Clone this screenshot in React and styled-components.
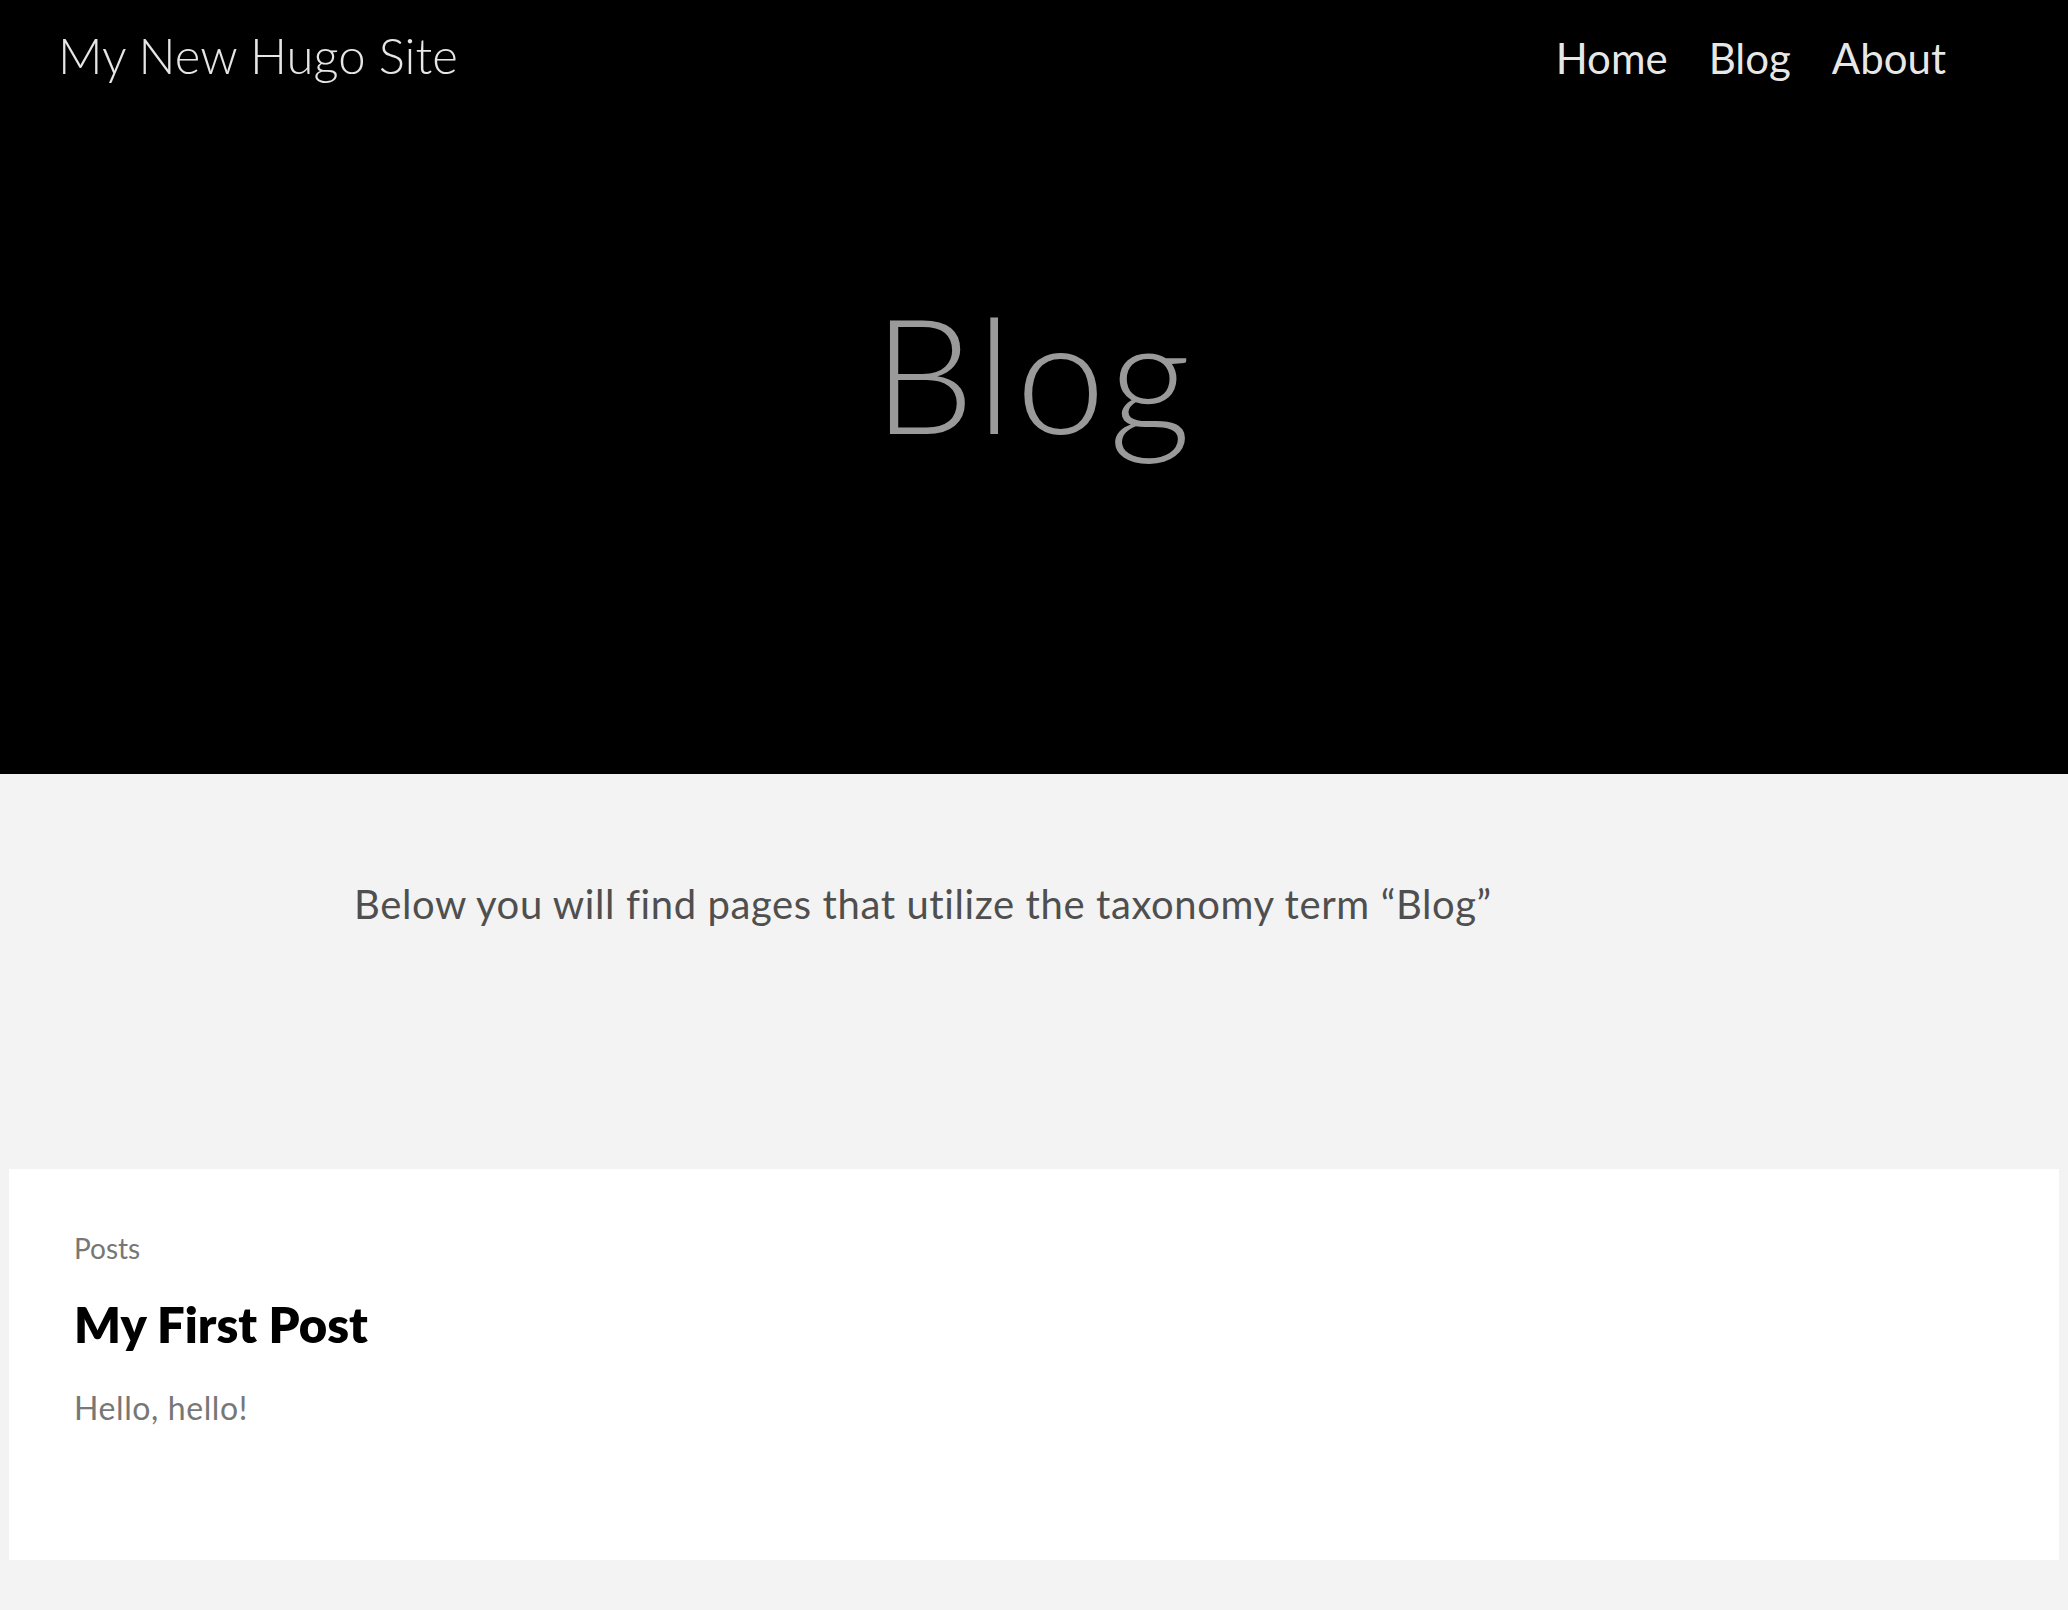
import React from "react";
import styled, { createGlobalStyle } from "styled-components";

const GlobalStyle = createGlobalStyle`
  html, body {
    margin: 0;
    padding: 0;
    background: #f3f3f3;
    font-family: Lato, "Noto Sans", sans-serif;
  }
  * { box-sizing: border-box; }
`;

const Header = styled.header`
  background: #000;
  padding-bottom: 302px;
`;

const Nav = styled.nav`
  display: flex;
  justify-content: space-between;
  align-items: baseline;
  padding: 25px 122px 0 58px;
`;

const SiteTitle = styled.a`
  font-size: 49px;
  line-height: 60px;
  font-weight: 300;
  color: rgba(255, 255, 255, 0.9);
  text-decoration: none;
`;

const Menu = styled.ul`
  display: flex;
  gap: 41px;
  margin: 0;
  padding: 0;
  list-style: none;
`;

const MenuLink = styled.a`
  font-size: 42px;
  line-height: 60px;
  font-weight: 400;
  color: rgba(255, 255, 255, 0.92);
  text-decoration: none;
`;

const Hero = styled.h1`
  margin: 184px 0 0;
  text-align: center;
  font-size: 160px;
  line-height: 200px;
  font-weight: 300;
  letter-spacing: 4px;
  color: #9a9a9a;
`;

const Intro = styled.p`
  width: 1360px;
  margin: 100px auto 0;
  font-size: 40px;
  line-height: 60px;
  letter-spacing: 0.6px;
  color: #4f4f4f;
`;

const List = styled.section`
  padding: 235px 9px 50px;
`;

const Card = styled.article`
  background: #fff;
  padding: 58px 65px 128px;
`;

const Section = styled.span`
  display: block;
  font-size: 28px;
  line-height: 42px;
  color: #777;
`;

const PostTitle = styled.h2`
  margin: 25px 0 0;
  font-size: 49px;
  line-height: 60px;
  font-weight: 800;
  color: #000;
`;

const Summary = styled.p`
  margin: 30px 0 0;
  font-size: 32px;
  line-height: 48px;
  letter-spacing: 0.6px;
  color: #777;
`;

export default function App() {
  return (
    <>
      <GlobalStyle />
      <Header>
        <Nav>
          <SiteTitle href="#">My New Hugo Site</SiteTitle>
          <Menu>
            <li><MenuLink href="#">Home</MenuLink></li>
            <li><MenuLink href="#">Blog</MenuLink></li>
            <li><MenuLink href="#">About</MenuLink></li>
          </Menu>
        </Nav>
        <Hero>Blog</Hero>
      </Header>
      <Intro>Below you will find pages that utilize the taxonomy term “Blog”</Intro>
      <List>
        <Card>
          <Section>Posts</Section>
          <PostTitle>My First Post</PostTitle>
          <Summary>Hello, hello!</Summary>
        </Card>
      </List>
    </>
  );
}
